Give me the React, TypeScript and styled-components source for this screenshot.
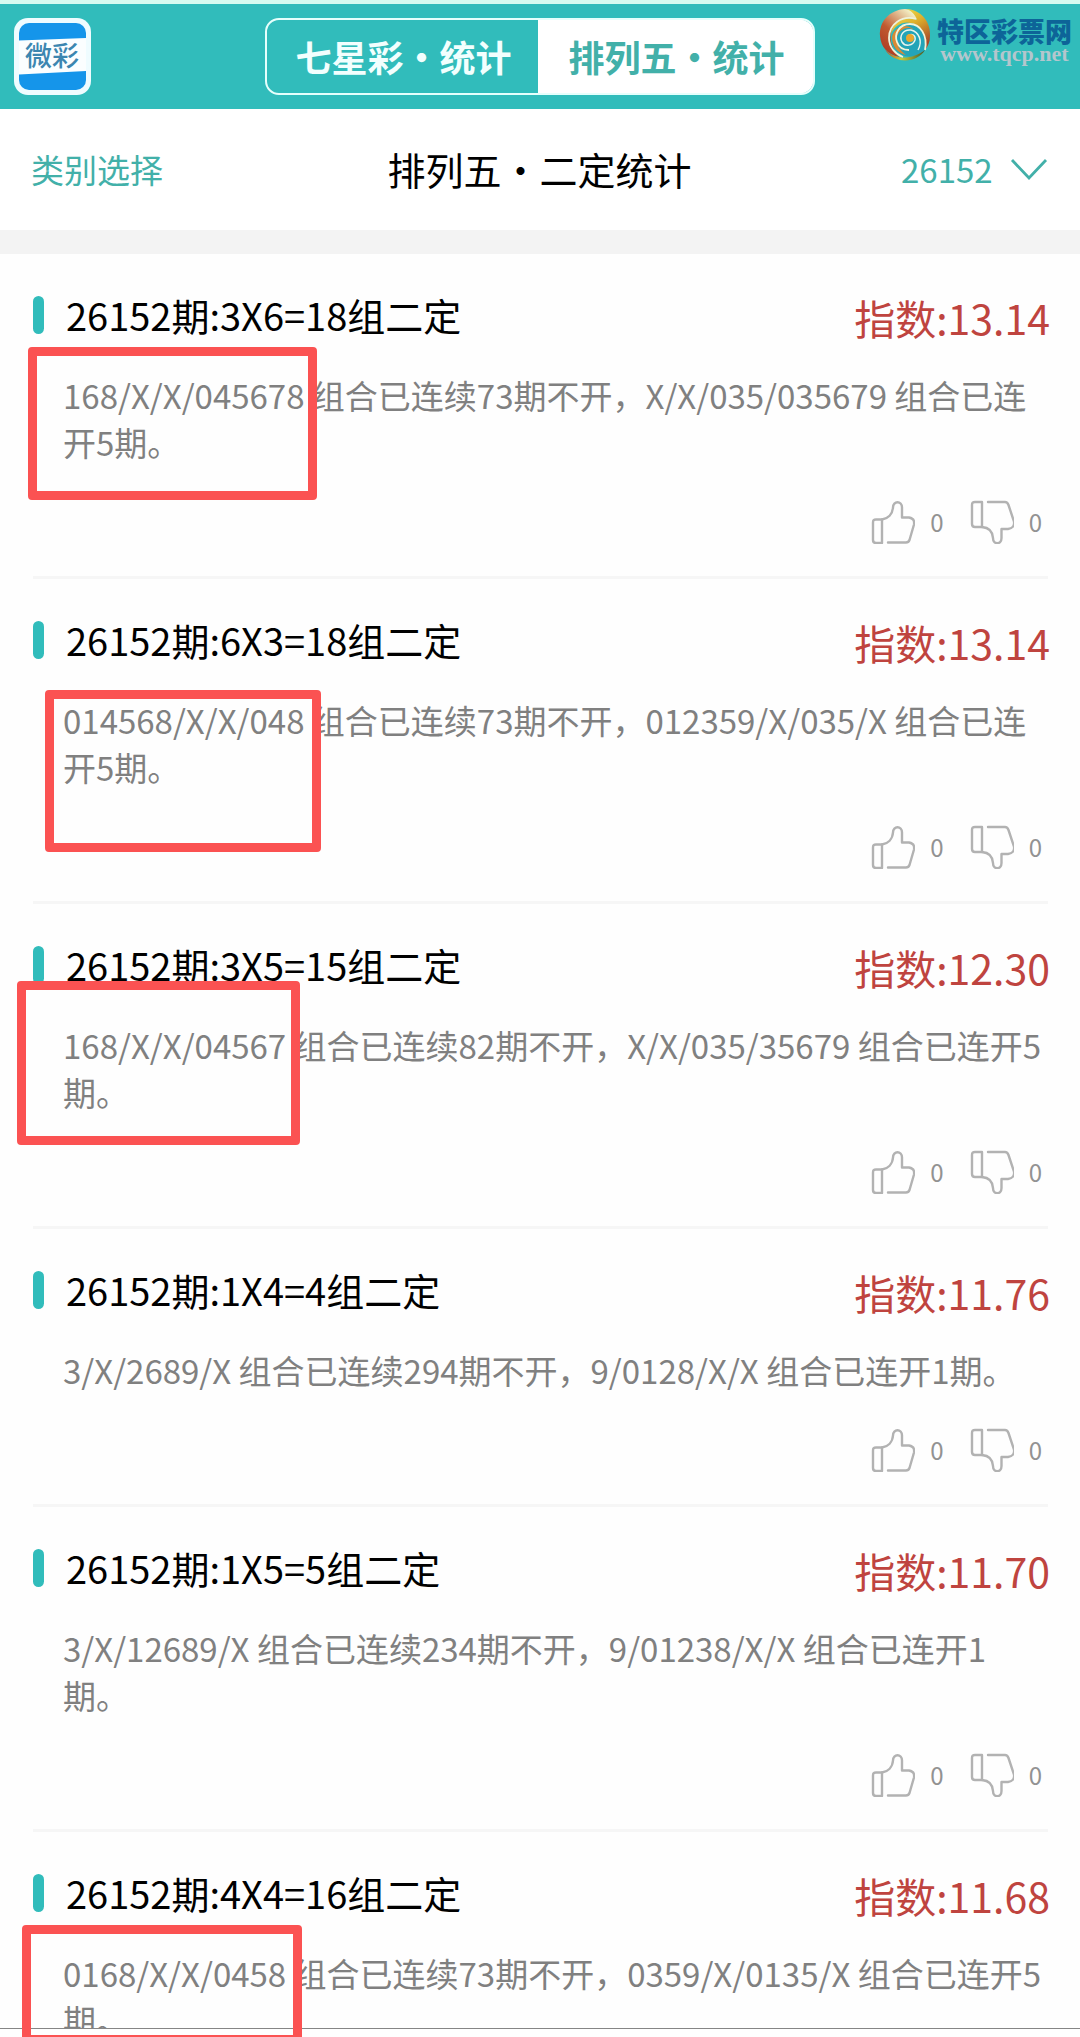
import React, { useState } from "react";
import styled, { createGlobalStyle } from "styled-components";

const teal = "#31bcbb";
const tealText = "#42b0a9";

const GlobalStyle = createGlobalStyle`
  *, *::before, *::after { box-sizing: border-box; }
  body {
    margin: 0;
    background: #fefefe;
    color: #000;
    font-family: "Noto Sans CJK SC", "Noto Sans", sans-serif;
  }
  button, select { font: inherit; color: inherit; background: none; border: 0; padding: 0; margin: 0; cursor: pointer; }
  h1, h2, p { margin: 0; font-weight: 400; }
`;

const Page = styled.div`
  position: relative;
  height: 100vh;
  overflow: hidden;
  background: #fefefe;
`;

const Header = styled.header`
  position: relative;
  display: grid;
  grid-template-columns: 1fr auto 1fr;
  align-items: center;
  padding: 14px;
  border-top: 4px solid #d6fbf1;
  background: ${teal};
  height: 109px;
`;

const Logo = styled.svg`
  display: block;
  width: 77px;
  height: 77px;
`;

const Tabs = styled.div`
  display: flex;
  border: 2px solid #e6fffc;
  border-radius: 14px;
  overflow: hidden;
`;

const Tab = styled.button<{ $active: boolean }>`
  width: 273px;
  height: 73px;
  padding-bottom: 2px;
  font-size: 36px;
  font-weight: 700;
  line-height: 70px;
  color: ${(p) => (p.$active ? tealText : "#f2fffe")};
  background: ${(p) => (p.$active ? "#fff" : "transparent")};
  box-shadow: ${(p) => (p.$active ? "0 0 0 2px #fff" : "none")};
`;

const Watermark = styled.div`
  position: absolute;
  top: 4px;
  right: 8px;
  display: flex;
  align-items: flex-start;
  gap: 6px;
`;

const Emblem = styled.svg`
  display: block;
  width: 52px;
  height: 54px;
`;

const SiteText = styled.div`
  display: flex;
  flex-direction: column;
  align-items: center;
  padding-top: 7px;
`;

const SiteName = styled.span`
  font-size: 27px;
  font-weight: 900;
  line-height: 32px;
  color: #0d6498;
`;

const SiteUrl = styled.span`
  font-family: "Liberation Serif", serif;
  font-size: 22px;
  font-weight: 700;
  line-height: 14px;
  color: #b4c6cd;
`;

const SubHeader = styled.div`
  display: grid;
  grid-template-columns: 1fr auto 1fr;
  align-items: center;
  height: 121px;
  padding: 0 32px 2px 31px;
  background: #fff;
`;

const CategoryButton = styled.button`
  justify-self: start;
  font-size: 33px;
  line-height: 48px;
  color: ${tealText};
`;

const PageTitle = styled.h1`
  font-size: 38px;
  line-height: 48px;
`;

const IssuePicker = styled.label`
  position: relative;
  justify-self: end;
  display: flex;
  align-items: center;
  color: ${tealText};
`;

const IssueSelect = styled.select`
  appearance: none;
  padding-right: 55px;
  font-size: 33px;
  line-height: 48px;
  outline: none;
`;

const Chevron = styled.svg`
  position: absolute;
  right: 0;
  width: 38px;
  height: 22px;
  pointer-events: none;
`;

const Band = styled.div`
  height: 24px;
  background: #f3f3f3;
`;

const List = styled.main`
  display: flex;
  flex-direction: column;
`;

const Item = styled.article`
  position: relative;
  padding: 38px 30px 0 33px;
`;

const ItemHead = styled.div`
  display: flex;
  justify-content: space-between;
  align-items: flex-start;
`;

const ItemTitle = styled.h2`
  display: flex;
  align-items: center;
  gap: 22px;
  font-size: 38px;
  line-height: 46px;

  &::before {
    content: "";
    width: 11px;
    height: 38px;
    border-radius: 6px;
    background: ${teal};
  }
`;

const Index = styled.span`
  font-size: 41px;
  line-height: 50px;
  color: #bf443f;
`;

const Body = styled.p`
  padding: 30px 2px 0 30px;
  font-size: 33px;
  line-height: 47px;
  color: #808080;
`;

const Actions = styled.div`
  display: flex;
  justify-content: flex-end;
  gap: 26px;
  padding: 34px 8px 32px 0;
`;

const Vote = styled.button`
  display: flex;
  align-items: center;
  gap: 15px;
  height: 44px;
  font-size: 24px;
  line-height: 44px;
  color: #929292;
`;

const VoteIcon = styled.svg`
  width: 44px;
  height: 44px;
  fill: none;
  stroke: #b2b2b2;
  stroke-width: 2.400;
  stroke-linecap: round;
  stroke-linejoin: round;
`;

const Divider = styled.hr`
  height: 3px;
  margin: 0 2px 0 0;
  border: 0;
  background: #f6f6f6;
`;

const Mark = styled.div<{ $x: number; $y: number; $w: number; $h: number }>`
  position: absolute;
  z-index: 2;
  left: ${(p) => p.$x}px;
  top: ${(p) => p.$y}px;
  width: ${(p) => p.$w}px;
  height: ${(p) => p.$h}px;
  border: 9px solid #fb5252;
  border-radius: 4px;
  pointer-events: none;
`;

const BottomBar = styled.footer`
  position: absolute;
  z-index: 1;
  left: 0;
  right: 0;
  bottom: 0;
  height: 9px;
  border-top: 1px solid #858585;
  background: #fefefe;
`;

type Box = { x: number; y: number; w: number; h: number };
type Entry = { title: string; index: string; text: string; mark?: Box };

const entries: Entry[] = [
  {
    title: "26152期:3X6=18组二定",
    index: "13.14",
    text: "168/X/X/045678 组合已连续73期不开，X/X/035/035679 组合已连开5期。",
    mark: { x: 28, y: 93, w: 289, h: 153 },
  },
  {
    title: "26152期:6X3=18组二定",
    index: "13.14",
    text: "014568/X/X/048 组合已连续73期不开，012359/X/035/X 组合已连开5期。",
    mark: { x: 45, y: 111, w: 276, h: 162 },
  },
  {
    title: "26152期:3X5=15组二定",
    index: "12.30",
    text: "168/X/X/04567 组合已连续82期不开，X/X/035/35679 组合已连开5期。",
    mark: { x: 17, y: 77, w: 283, h: 164 },
  },
  {
    title: "26152期:1X4=4组二定",
    index: "11.76",
    text: "3/X/2689/X 组合已连续294期不开，9/0128/X/X 组合已连开1期。",
  },
  {
    title: "26152期:1X5=5组二定",
    index: "11.70",
    text: "3/X/12689/X 组合已连续234期不开，9/01238/X/X 组合已连开1期。",
  },
  {
    title: "26152期:4X4=16组二定",
    index: "11.68",
    text: "0168/X/X/0458 组合已连续73期不开，0359/X/0135/X 组合已连开5期。",
    mark: { x: 22, y: 93, w: 280, h: 119 },
  },
];

const ThumbUp = () => (
  <VoteIcon viewBox="0 0 44 44" aria-hidden="true">
    <path d="M11 19.500H5Q2 19.500 2 22.500V40Q2 43 5 43H11Z" />
    <path d="M11 19.500C17 18.500 21.500 14 22 7.500C22 0.500 31 0.500 31 7.500V17.500H38Q44 18.500 43 24.500L38.500 40Q37.500 42.500 35 42.500H17" />
  </VoteIcon>
);

const ThumbDown = () => (
  <VoteIcon viewBox="0 0 44 44" aria-hidden="true">
    <path d="M12 2H5Q2 2 2 5V24Q2 27 5 27H12Z" />
    <path d="M12 27C18 27.500 22.500 31 23 38C23 45 31.500 45 31.500 38V29H38Q45 28 44 21.500L38.500 5Q37.500 2 35 2H18" />
  </VoteIcon>
);

const Row = ({ entry }: { entry: Entry }) => (
  <Item>
    <ItemHead>
      <ItemTitle>{entry.title}</ItemTitle>
      <Index>指数:{entry.index}</Index>
    </ItemHead>
    <Body>{entry.text}</Body>
    <Actions>
      <Vote type="button" aria-label="赞">
        <ThumbUp />
        <span>0</span>
      </Vote>
      <Vote type="button" aria-label="踩">
        <ThumbDown />
        <span>0</span>
      </Vote>
    </Actions>
    <Divider />
    {entry.mark && <Mark $x={entry.mark.x} $y={entry.mark.y} $w={entry.mark.w} $h={entry.mark.h} />}
  </Item>
);

export default function App() {
  const [tab, setTab] = useState(1);
  return (
    <Page lang="zh-CN">
      <GlobalStyle />
      <Header>
        <Logo viewBox="0 0 77 77" role="img" aria-label="微彩">
          <rect width="77" height="77" rx="14" fill="#effcff" />
          <rect x="5" y="5" width="67" height="67" rx="10" fill="#1595ea" />
          <path d="M5 22.500L72 20V53L5 56.500Z" fill="#fbfeff" />
          <text x="11" y="48" fontSize="27" fontWeight="500" fill="#3c86b0">微彩</text>
        </Logo>
        <Tabs>
          {["七星彩・统计", "排列五・统计"].map((label, i) => (
            <Tab key={label} type="button" $active={tab === i} onClick={() => setTab(i)}>
              {label}
            </Tab>
          ))}
        </Tabs>
        <Watermark>
          <Emblem viewBox="0 0 52 54" aria-hidden="true">
            <defs>
              <linearGradient id="warm" x1="0" y1="1" x2="0.7" y2="0">
                <stop offset="0" stopColor="#a8321f" />
                <stop offset="0.5" stopColor="#c05a30" />
                <stop offset="1" stopColor="#f3efc4" />
              </linearGradient>
              <linearGradient id="gold" x1="0" y1="0" x2="0.6" y2="1">
                <stop offset="0" stopColor="#f0ea5a" />
                <stop offset="0.5" stopColor="#dfb02c" />
                <stop offset="1" stopColor="#a84a28" />
              </linearGradient>
              <linearGradient id="leaf" x1="0" y1="0" x2="1" y2="0">
                <stop offset="0" stopColor="#c8481f" />
                <stop offset="0.4" stopColor="#c8c936" />
                <stop offset="1" stopColor="#4a5a28" />
              </linearGradient>
            </defs>
            <path d="M26 1C10 2 0 14 1 28C2 39 8 46 20 49C10 38 8 22 20 13C26 9 34 9 40 13C38 5 32 1 26 1Z" fill="url(#warm)" />
            <path d="M26 1C42 1 52 14 51 28C51 34 49 38 46 42C47 28 42 17 32 15C24 13 16 17 12 26C13 14 26 7 38 12C36 6 32 2 26 1Z" fill="url(#gold)" />
            <path d="M46 42C47 28 42 17 32 15C23 14 15 20 13 29C12 38 17 45 26 48C34 50 42 47 46 42Z" fill="#23a4b8" />
            <path d="M13 29C13 38 18 45 27 47C20 42 17 36 18 30C19 22 28 17 35 22C29 15 15 18 13 29Z" fill="#d98a34" />
            <path d="M6 42C18 53 34 51 46 42C38 55 17 57 6 42Z" fill="url(#leaf)" />
            <path d="M37 11C23 7 10 16 10 30C10 39 16 46 24 49" fill="none" stroke="#eef3dc" strokeWidth="1.800" />
            <path d="M46 42C49 27 41 16 31 16C20 16 15 26 18 34C20 40 25 42 30 42" fill="none" stroke="#f2f3d8" strokeWidth="1.800" />
            <path d="M39 42C44 33 40 24 32 22C24 21 20 28 23 34C26 39 34 38 36 32C37 27 32 25 29 28" fill="none" stroke="#e9f5ee" strokeWidth="1.500" />
            <circle cx="31" cy="30" r="4" fill="#eaa62e" />
          </Emblem>
          <SiteText>
            <SiteName>特区彩票网</SiteName>
            <SiteUrl>www.tqcp.net</SiteUrl>
          </SiteText>
        </Watermark>
      </Header>
      <SubHeader>
        <CategoryButton type="button">类别选择</CategoryButton>
        <PageTitle>排列五・二定统计</PageTitle>
        <IssuePicker>
          <IssueSelect aria-label="期号" defaultValue="26152">
            <option value="26152">26152</option>
          </IssueSelect>
          <Chevron viewBox="0 0 38 22" fill="none" stroke="currentColor" strokeWidth="2.800" aria-hidden="true">
            <path d="M2 2L19 20L36 2" />
          </Chevron>
        </IssuePicker>
      </SubHeader>
      <Band />
      <List>
        {entries.map((entry) => (
          <Row key={entry.title} entry={entry} />
        ))}
      </List>
      <BottomBar />
    </Page>
  );
}
